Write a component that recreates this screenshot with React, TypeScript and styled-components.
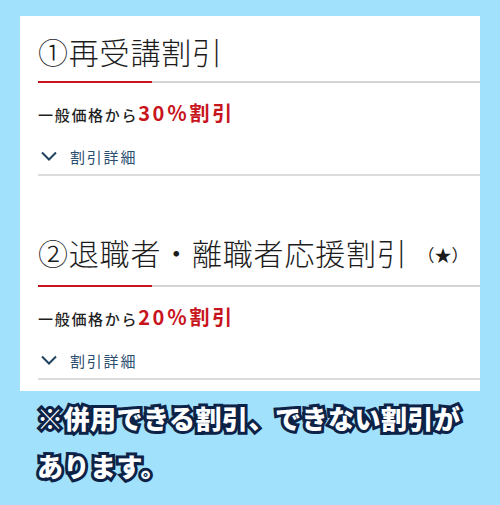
import React from 'react'
import styled, { createGlobalStyle } from 'styled-components'

const GlobalStyle = createGlobalStyle`
    html, body {
        margin: 0;
        padding: 0;
        background: #a1e1fc;
    }
    body {
        font-family: "Noto Sans CJK JP", "Noto Sans", sans-serif;
        width: 500px;
        height: 505px;
        overflow: hidden;
    }
`

interface Discount {
    title: string;
    note?: string;
    rate: string;
}

const discounts: Discount[] = [
    { title: '①再受講割引', rate: '30％割引' },
    { title: '②退職者・離職者応援割引', note: '（★）', rate: '20％割引' },
]

const Chevron = () => (
    <svg width="16" height="10" viewBox="0 0 16 10">
        <path d="M1 1.5 L8 8.5 L15 1.5" fill="none" stroke="#1f4262" strokeWidth="2" />
    </svg>
)

const App: React.FC = () => {
    return (
        <Page>
            <GlobalStyle />
            <Panel>
                {discounts.map((d, i) => (
                    <Section key={d.title} first={i === 0}>
                        <Title>
                            {d.title}
                            {d.note && <Note>{d.note}</Note>}
                        </Title>
                        <Rule />
                        <Price>
                            一般価格から<Rate>{d.rate}</Rate>
                        </Price>
                        <Details>
                            <Chevron />
                            <span>割引詳細</span>
                        </Details>
                        <Divider />
                    </Section>
                ))}
            </Panel>
            <Caption>
                ※併用できる割引、できない割引が<br />あります。
            </Caption>
        </Page>
    )
}

const Page = styled.div`
    display: flex;
    flex-direction: column;
    padding-top: 16px;
`
const Panel = styled.div`
    margin: 0 20px;
    padding: 0 0 11px 18px;
    background: #fff;
`
const Section = styled.section<{ first: boolean }>`
    display: flex;
    flex-direction: column;
    padding-top: ${p => (p.first ? '15px' : '56px')};
`
const Title = styled.h2`
    margin: 0 0 10px;
    font-size: 30px;
    line-height: 40px;
    font-weight: 300;
    letter-spacing: 0.8px;
    color: #1c1c1c;
    white-space: nowrap;
`
const Note = styled.span`
    font-size: 17px;
    font-weight: 400;
    letter-spacing: 0;
    margin-left: 10px;
    vertical-align: 3px;
`
const Rule = styled.div`
    height: 2px;
    background: linear-gradient(to right, #c8141c 114px, #d4d4d4 114px);
`
const Price = styled.p`
    margin: 16px 0 0;
    font-size: 15px;
    line-height: 28px;
    font-weight: 500;
    letter-spacing: 1.7px;
    color: #1e1e1e;
`
const Rate = styled.span`
    font-size: 20px;
    font-weight: 700;
    letter-spacing: 2.6px;
    color: #c8141c;
`
const Details = styled.div`
    display: flex;
    align-items: center;
    gap: 13px;
    margin-top: 15px;
    padding-left: 3px;
    height: 24px;
    font-size: 15px;
    letter-spacing: 1.8px;
    color: #2c4f70;
`
const Divider = styled.div`
    margin-top: 6px;
    height: 2px;
    background: #dcdcdc;
`
const Caption = styled.p`
    margin: 3px 0 0 37px;
    font-size: 26px;
    line-height: 48px;
    font-weight: 900;
    letter-spacing: 0.5px;
    color: #fff;
    -webkit-text-stroke: 6px #0c2246;
    paint-order: stroke fill;
    white-space: nowrap;
`

export default App
